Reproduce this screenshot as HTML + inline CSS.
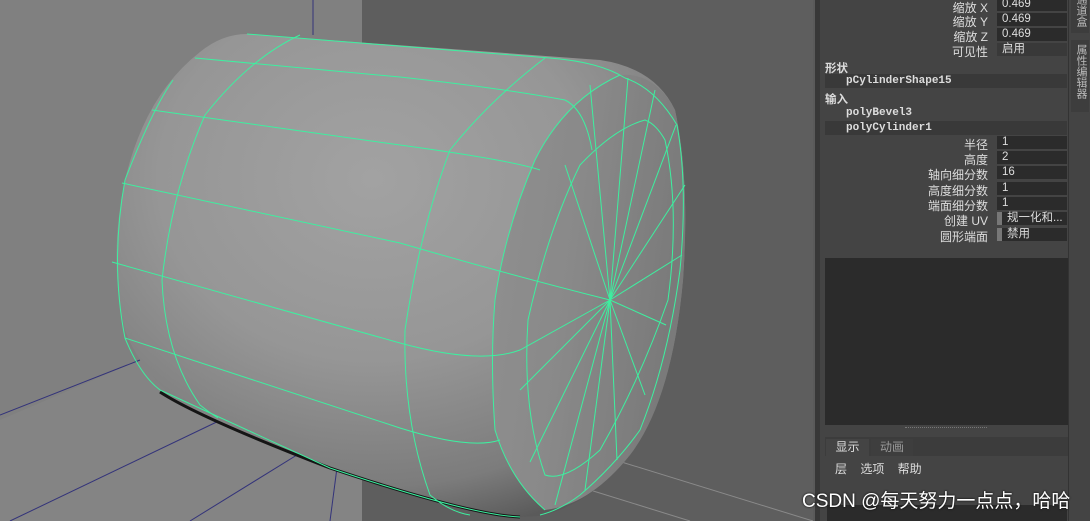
<!DOCTYPE html>
<html><head><meta charset="utf-8"><style>
*{margin:0;padding:0;box-sizing:border-box}
body{width:1090px;height:521px;overflow:hidden;background:#444;font-family:"Liberation Sans","Noto Sans CJK SC",sans-serif;position:relative}
svg{display:block}
.vp{position:absolute;left:0;top:0;width:813px;height:521px;overflow:hidden}
.panel{position:absolute;left:813px;top:0;width:277px;height:521px;background:#444;border-left:2px solid #5a5a5a}
.side{position:absolute;left:0;top:0;width:5px;height:521px;background:#383838}
.lab{position:absolute;right:102px;font-size:12px;color:#ddd;text-align:right;white-space:nowrap}
.fld{position:absolute;left:182px;width:70px;height:13px;background:#2b2b2b;color:#ddd;font-size:11.5px;padding-left:5px;line-height:13px}
.hd{position:absolute;left:10px;font-size:11.5px;font-weight:bold;color:#ddd}
.row{position:absolute;left:10px;width:242px;height:14px;color:#ddd;font-family:"Liberation Mono",monospace;font-weight:bold;font-size:11px;padding-left:21px;line-height:14px}
.tabs{position:absolute;left:1068px;top:0;width:22px;height:521px;background:#444;border-left:1px solid #333}
.vt{position:absolute;left:4px;color:#bbb;font-size:11px;writing-mode:vertical-rl}
</style></head><body>
<div class="vp">
<svg width="813" height="521" viewBox="0 0 813 521">
<defs>
<radialGradient id="cyl" cx="0.45" cy="0.3" r="0.75">
<stop offset="0" stop-color="#a2a2a2"/><stop offset="0.5" stop-color="#969696"/><stop offset="0.85" stop-color="#7c7c7c"/><stop offset="1" stop-color="#5a5a5a"/></radialGradient>
<linearGradient id="endg" x1="0" y1="0" x2="1" y2="0.3">
<stop offset="0" stop-color="#909090"/><stop offset="0.5" stop-color="#898989"/><stop offset="1" stop-color="#7a7a7a"/></linearGradient>
</defs>
<rect width="813" height="521" fill="#808080"/>
<rect x="362" y="0" width="451" height="521" fill="#5e5e5e"/>
<polygon points="0,420 140,360 362,380 362,521 0,521" fill="#848484"/>
<g stroke="#33337a" stroke-width="1" fill="none">
<line x1="313" y1="0" x2="313" y2="35"/>
<line x1="0" y1="415" x2="140" y2="360"/>
<line x1="10" y1="521" x2="225" y2="418"/>
<line x1="190" y1="521" x2="305" y2="450"/>
<line x1="338" y1="460" x2="330" y2="521"/>
</g>
<g stroke="#8a8a8a" stroke-width="1"><line x1="615" y1="460" x2="813" y2="521"/><line x1="590" y1="490" x2="690" y2="521"/></g>
<path d="M247,34 L600,60 Q655,68 675,110 Q690,180 683,280 Q672,400 630,455 Q590,505 540,516 L520,517 Q470,515 330,468 L215,420 Q150,395 125,330 Q108,260 125,180 Q145,95 200,52 Q222,34 247,34Z" fill="url(#cyl)"/>
<path d="M620,75 Q565,100 535,160 Q505,230 495,300 Q490,360 495,430 Q510,480 545,510 Q590,505 630,455 Q672,400 683,280 Q690,180 675,110 Q655,72 620,75Z" fill="url(#endg)"/>
<path d="M160,392 Q200,418 330,468 Q470,515 520,517" stroke="#151515" stroke-width="3" fill="none"/>
<g stroke="#3df0a0" stroke-width="1" fill="none">
<path d="M247,34 L550,58 Q600,62 625,78"/>
<path d="M195,58 L400,77 Q500,88 565,100 Q585,110 592,150"/>
<path d="M152,110 L400,145 Q510,160 540,170"/>
<path d="M122,183 L400,243 Q510,275 610,300"/>
<path d="M112,262 L400,343 Q480,365 520,350 Q565,325 610,300"/>
<path d="M125,338 L400,428 Q470,450 500,440"/>
<path d="M160,390 L330,468 Q470,515 520,517"/>
<path d="M300,35 Q250,58 205,115 Q172,190 162,280 Q165,355 200,405 Q210,413 218,418"/>
<path d="M173,80 Q152,110 125,180 Q110,262 125,338 Q140,375 160,390"/>
<path d="M545,58 Q490,100 450,150 Q420,230 405,330 Q403,420 430,495 Q450,512 470,515"/>
<path d="M620,75 Q565,100 535,160 Q505,230 495,300 Q490,360 495,430 Q510,480 545,510"/>
<path d="M625,78 Q655,88 677,125 Q688,185 680,270 Q668,360 640,430 Q615,465 580,495 Q560,510 540,515"/>
<path d="M645,120 Q615,128 580,165 Q548,230 528,320 Q522,410 545,475 Q565,482 600,450 Q640,380 668,300 Q680,210 665,140 Q656,124 645,120Z"/>
</g>
<g stroke="#3df0a0" stroke-width="1">
<line x1="610" y1="300" x2="590" y2="85"/><line x1="610" y1="300" x2="628" y2="78"/>
<line x1="610" y1="300" x2="655" y2="90"/><line x1="610" y1="300" x2="676" y2="125"/>
<line x1="610" y1="300" x2="685" y2="185"/><line x1="610" y1="300" x2="682" y2="255"/>
<line x1="610" y1="300" x2="666" y2="325"/><line x1="610" y1="300" x2="645" y2="395"/>
<line x1="610" y1="300" x2="617" y2="460"/><line x1="610" y1="300" x2="585" y2="490"/>
<line x1="610" y1="300" x2="555" y2="505"/><line x1="610" y1="300" x2="530" y2="462"/>
<line x1="610" y1="300" x2="520" y2="390"/><line x1="610" y1="300" x2="565" y2="165"/>
</g>
</svg>
</div>
<div class="panel">
<div class="side"></div>
<div class="lab" style="top:-1px">缩放 X</div><div class="fld" style="top:-2px">0.469</div>
<div class="lab" style="top:13px">缩放 Y</div><div class="fld" style="top:13px">0.469</div>
<div class="lab" style="top:28px">缩放 Z</div><div class="fld" style="top:28px">0.469</div>
<div class="lab" style="top:43px">可见性</div><div class="fld" style="top:43px;background:#393939">启用</div>
<div class="hd" style="top:60px">形状</div>
<div class="row" style="top:74px;background:#393939">pCylinderShape15</div>
<div class="hd" style="top:91px">输入</div>
<div class="row" style="top:106px">polyBevel3</div>
<div class="row" style="top:121px;background:#393939">polyCylinder1</div>
<div class="lab" style="top:136px">半径</div><div class="fld" style="top:136px">1</div>
<div class="lab" style="top:151px">高度</div><div class="fld" style="top:151px">2</div>
<div class="lab" style="top:166px">轴向细分数</div><div class="fld" style="top:166px">16</div>
<div class="lab" style="top:182px">高度细分数</div><div class="fld" style="top:182px">1</div>
<div class="lab" style="top:197px">端面细分数</div><div class="fld" style="top:197px">1</div>
<div class="lab" style="top:212px">创建 UV</div><div class="fld" style="top:212px;border-left:5px solid #777">规一化和...</div>
<div class="lab" style="top:228px">圆形端面</div><div class="fld" style="top:228px;border-left:5px solid #777">禁用</div>
<div style="position:absolute;left:10px;top:258px;width:243px;height:167px;background:#2b2b2b"></div>
<div style="position:absolute;left:90px;top:427px;width:82px;border-top:1px dotted #777"></div>
<div style="position:absolute;left:10px;top:437px;width:245px;height:70px;background:#3c3c3c"></div>
<div style="position:absolute;left:11px;top:439px;width:43px;height:17px;background:#444;color:#ddd;font-size:12px;text-align:center;line-height:17px">显示</div>
<div style="position:absolute;left:56px;top:439px;width:42px;height:17px;background:#3e3e3e;color:#999;font-size:12px;text-align:center;line-height:17px">动画</div>
<div style="position:absolute;left:10px;top:456px;width:245px;height:50px;background:#444"></div>
<div style="position:absolute;left:20px;top:460px;color:#ddd;font-size:12px;word-spacing:10px">层 选项 帮助</div>
<div style="position:absolute;left:12px;top:505px;width:240px;height:16px;background:#2b2b2b"></div>
</div>
<div class="tabs">
<div style="position:absolute;left:2px;top:0;width:18px;height:33px;background:#3d3d3d"></div>
<div class="vt" style="top:-6px">通道盒</div>
<div style="position:absolute;left:2px;top:40px;width:18px;height:72px;background:#3d3d3d"></div>
<div class="vt" style="top:44px">属性编辑器</div>
</div>
<div style="position:absolute;left:802px;top:486px;color:#fff;font-size:19px;text-shadow:0 0 2px #000;white-space:nowrap">CSDN @每天努力一点点，哈哈</div>
</body></html>
